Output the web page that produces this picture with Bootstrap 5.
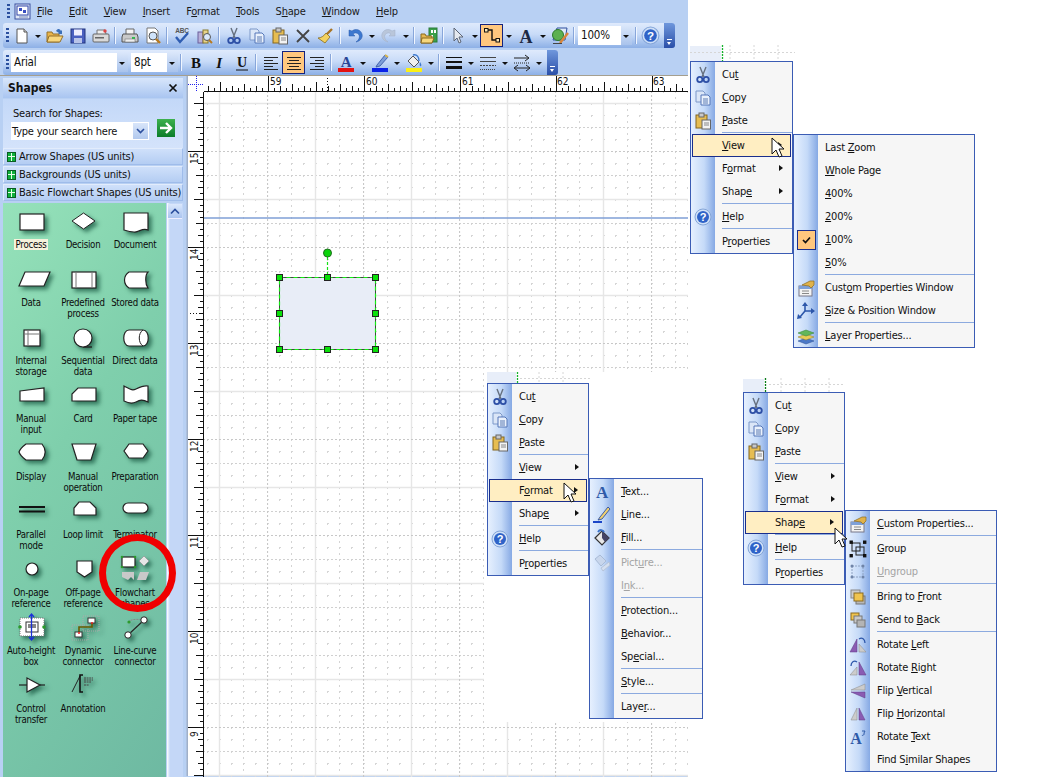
<!DOCTYPE html>
<html lang="en">
<head>
<meta charset="utf-8">
<title>Visio</title>
<link href="https://cdn.jsdelivr.net/npm/bootstrap@5.3.0/dist/css/bootstrap.min.css" rel="stylesheet">
<style>
html,body{margin:0;height:100%;background:#fff;overflow:hidden}
body{font-family:"DejaVu Sans Condensed","DejaVu Sans","Liberation Sans",sans-serif;font-size:11px;letter-spacing:-.2px;line-height:1;color:#111;position:relative;width:1046px;height:777px}
.vwin{width:688px;height:777px;background:#b8d0f3}
.vmenubar{height:23px;padding-left:7px;color:#1a1a1a;font-size:11px}
.vmenubar span{position:relative}
.vgrip{width:3px;height:16px;background:repeating-linear-gradient(#2a4f9e 0 2px,transparent 2px 4px);flex:none}
.vlogo{flex:none}
.v36{margin-left:5px}
.vgap{margin-left:16.3px}
.vtool{margin-left:3px;height:25px;background:linear-gradient(#dfeafc,#c8dbf8 45%,#8db0e6);border-radius:3px;position:relative}
.vt1{width:672px;margin-bottom:2px}
.vt2{width:555px}
.vgp{width:8px;flex:none;display:flex;justify-content:center}
.tb{width:23px;height:23px;flex:none;display:flex;align-items:center;justify-content:center}
.tb21{width:21px}
.ta{width:11px;height:23px;flex:none;position:relative}
.ta::after{content:"";position:absolute;left:3px;top:11px;border:3px solid transparent;border-top:3px solid #111;border-bottom:0}
.ts{width:6px;height:17px;flex:none;position:relative}
.ts::after{content:"";position:absolute;left:2px;top:0;width:1px;height:17px;background:#88a6da;box-shadow:1px 0 0 #f0f6ff}
.ton{background:#ffc77e;outline:1px solid #14237f;outline-offset:-1px}
.vcombo{height:19px;background:#fff;display:flex;align-items:center;padding-left:3px;position:relative;flex:none;font-size:11.5px}
.vcombo::after{content:"";position:absolute;right:0;top:0;width:11px;height:19px;background:linear-gradient(#d9e6fa,#a9c3ec)}
.vcombo::before{content:"";position:absolute;z-index:1;right:3px;top:9px;border:3px solid transparent;border-top:3px solid #111;border-bottom:0}
.cb1{width:117px}.cb2{width:47px;margin-left:3px}.cb3{width:54px;margin:0 1px 0 1px}
.vchev{position:absolute;right:0;top:0;width:11px;height:25px;background:linear-gradient(#6f97dc,#2a4fa8);border-radius:0 3px 3px 0}
.vchev::after{content:"";position:absolute;left:3px;top:16px;width:5px;border-top:1px solid #fff}
.vchev::before{content:"";position:absolute;left:3px;top:19px;border:2.5px solid transparent;border-top:3px solid #fff;border-bottom:0}
.vmain{height:701px;border-top:1px solid #a59f8e}
.vside{width:183px;padding-left:3px;flex:none;padding-top:2px}
.vshead{height:20px;background:linear-gradient(#d8e6fb,#a9c5f1);padding:0 5px;font-weight:700;font-size:12px;letter-spacing:0;margin-bottom:1px}
.vsearch{height:49px;background:linear-gradient(#c3d8f8,#d4e3fb);padding:9px 0 0 10px;font-size:11px}
.vsinp{height:18px;width:138px;background:#fff;padding-left:1px;margin-top:3px;position:relative;align-items:center;display:flex;margin-left:-2px}
.vsinp i{position:absolute;right:1px;top:1px;width:15px;height:16px;background:linear-gradient(#d8e5fa,#b2c9ee)}
.vgo{width:18px;height:18px;margin-left:8px;background:linear-gradient(#3db14e,#0b7d2a);display:flex;align-items:center;justify-content:center}
.vsten{height:17px;margin-bottom:1px;background:linear-gradient(#cfe0fa,#b4cdf3);border:1px solid #9fbcea;border-left-color:#e2ecfc;border-top-color:#e2ecfc;padding-left:3px;gap:3px;font-size:11px;white-space:nowrap;width:180px}
.vstic{width:9px;height:10px;background:#0fb03c;border:1px solid #0a5d22;display:block;background-image:linear-gradient(#e8ffe8,#e8ffe8),linear-gradient(#e8ffe8,#e8ffe8);background-size:7px 1px,1px 8px;background-position:center,center;background-repeat:no-repeat;flex:none}
.vshp{height:575px;margin-top:2px;position:relative}
.vgreen{width:163px;background:linear-gradient(125deg,#96e2ba,#7fcfac 40%,#6eb9a2);padding:5px 0 0 2px;display:grid;grid-template-columns:repeat(3,52px);grid-auto-rows:58px;align-content:start;flex:none}
.vcell{text-align:center;font-size:9.6px;letter-spacing:-.25px;line-height:11px;color:#0c0c0c;white-space:nowrap}
.vcell svg{display:block;overflow:visible;filter:drop-shadow(3px 3px 2px rgba(10,70,50,.65))}
.vcell div{margin-top:1px}
.vpick span{background:#f6f2dc;padding:0 2px}
.vscroll{width:16px;margin-left:1px;background:linear-gradient(to right,#fff 0,#c4d7f7 3px,#c4d7f7);position:relative;flex:none}
.vsup{height:15px;margin:1px;background:linear-gradient(#dbe8fc,#aac4ef);border-bottom:1px solid #eef;display:flex;align-items:center;justify-content:center}
.vsplit{width:5px;flex:none;background:linear-gradient(to right,#b8d0f3 50%,#9aa7bd)}
.vcanvas{width:500px;background:#fff;flex:none}
.vcorner{width:16px;height:16px;flex:none}
.vnum{font:10px "DejaVu Sans Condensed","DejaVu Sans",sans-serif;letter-spacing:0;fill:#111}
.vring{position:absolute;left:99px;top:534px;width:77px;height:78px;border:7px solid #f00000;border-radius:50%}
.vwhite{position:absolute;left:484px;top:372px;width:206px;height:350px;background:#fff}
.vfrag{position:absolute;display:block}
.vf1{left:690px;top:45px}.vf2{left:487px;top:372px}.vf3{left:743px;top:378px}
.vm{position:absolute;border:1.3px solid #3b5cb4;background:linear-gradient(to right,#e6f0fe,#c5daf8 55%,#86a9e4) no-repeat left top/24px 100%,#f6f6f6;padding-top:1px;color:#111;white-space:nowrap;font-size:11px}
.ma{left:690px;top:61px;width:103px}
.mb{left:793px;top:134px;width:182px}
.mc{left:487px;top:383px;width:102px}
.md{left:589px;top:478px;width:114px}
.me{left:743px;top:392px;width:102px}
.mf{left:845px;top:510px;width:152px}
.vi{height:23px;display:flex;align-items:center;position:relative}
.vii{width:24px;height:23px;display:flex;align-items:center;justify-content:center;flex:none}
.vit{padding-left:7px}
.vsub::after{content:"";position:absolute;right:9px;top:8px;border:3.5px solid transparent;border-left:4px solid #111;border-right:0}
.vhi{background:#ffeec2;outline:1.3px solid #1a2e8c;outline-offset:-1px;margin:0 1px}
.vhi .vii{margin-left:-1px}
.vdis{color:#a4a4a4}
.vsep{height:2px;background:#8caadf;margin-left:31px;border-bottom:1px solid #f6f6f6}
.vchk{width:19px;height:20px;background:#ffc77e;outline:1.3px solid #1a2e8c;outline-offset:-1px;display:flex;align-items:center;justify-content:center}
.vcur{position:absolute;display:block;z-index:5}
.vc1{left:771px;top:137px}.vc2{left:563px;top:482px}.vc3{left:834px;top:527px}
u{text-underline-offset:1px;text-decoration-thickness:1px}
</style>
</head>
<body>
<svg width="0" height="0" class="position-absolute">
<defs>
<symbol id="i-new" viewBox="0 0 18 18"><path d="M4 2h7l3 3v11H4z" fill="#fff" stroke="#555"/><path d="M11 2v3h3" fill="#ddd" stroke="#555"/></symbol>
<symbol id="i-open" viewBox="0 0 18 18"><path d="M1 5h5l1 2h6v8H1z" fill="#e9b44a" stroke="#94702a"/><path d="M3 9h14l-3 6H1z" fill="#f8d77e" stroke="#94702a"/><path d="M10 4c2-3 4-2 5 0l1-1v4h-4l1-1c-1-1-2-1-3-2z" fill="#3a6fb8"/></symbol>
<symbol id="i-save" viewBox="0 0 18 18"><rect x="2" y="2" width="14" height="14" fill="#4a60c0" stroke="#22347e"/><rect x="5" y="2.5" width="8" height="6" fill="#eef"/><rect x="5" y="11" width="8" height="5" fill="#b9c4e8"/></symbol>
<symbol id="i-web" viewBox="0 0 18 18"><path d="M5 7V3h8l1 4" fill="#eee" stroke="#777"/><rect x="1" y="7" width="16" height="8" rx="1" fill="#d9d9d9" stroke="#666"/><rect x="3" y="10" width="9" height="1.5" fill="#666"/><circle cx="13" cy="4" r="1.7" fill="#d44"/></symbol>
<symbol id="i-print" viewBox="0 0 18 18"><path d="M5 7V2h8v5" fill="#f4f4f4" stroke="#666"/><path d="M2 7h14l1 3v5H1v-5z" fill="#c9c9c9" stroke="#555"/><rect x="11" y="10" width="3" height="2" fill="#2bbd4b"/><rect x="4" y="12" width="10" height="3" fill="#eee" stroke="#777" stroke-width=".6"/></symbol>
<symbol id="i-prev" viewBox="0 0 18 18"><path d="M3 1h8l3 3v12H3z" fill="#fff" stroke="#777"/><circle cx="9" cy="9" r="4" fill="#cfe3fa" stroke="#555"/><path d="M12 12l4 4" stroke="#b97a1f" stroke-width="2.4"/></symbol>
<symbol id="i-spell" viewBox="0 0 18 18"><text x="9" y="6" text-anchor="middle" font-family="Liberation Sans,sans-serif" font-size="6.5" font-weight="700" fill="#555">ABC</text><path d="M3 10l4 5 8-9" fill="none" stroke="#2f5db2" stroke-width="2.4"/></symbol>
<symbol id="i-res" viewBox="0 0 18 18"><rect x="2" y="5" width="5" height="11" fill="#b9b0d8" stroke="#6a5f9c"/><rect x="7" y="3" width="5" height="13" fill="#e8d48c" stroke="#8a7a2a"/><circle cx="11" cy="10" r="3.5" fill="#dbe9fb" stroke="#555"/><path d="M13 13l3 3" stroke="#b97a1f" stroke-width="2"/></symbol>
<symbol id="i-cut" viewBox="0 0 18 18"><path d="M6 1l4 10M12 1L8 11" stroke="#66707f" stroke-width="1.4" fill="none"/><circle cx="5.8" cy="13.5" r="2.6" fill="none" stroke="#2d4fa6" stroke-width="1.8"/><circle cx="12.2" cy="13.5" r="2.6" fill="none" stroke="#2d4fa6" stroke-width="1.8"/></symbol>
<symbol id="i-copy" viewBox="0 0 18 18"><path d="M2 2h7l2 2v9H2z" fill="#dbe6f7" stroke="#7d98c9"/><path d="M7 6h7l2 2v8H7z" fill="#eaf1fc" stroke="#5577b8"/><path d="M9 10h5M9 12h5M9 14h5" stroke="#5b7ab3"/></symbol>
<symbol id="i-paste" viewBox="0 0 18 18"><rect x="2" y="3" width="11" height="13" fill="#e6bd52" stroke="#84661e"/><rect x="5" y="1" width="5" height="4" fill="#c8c8c8" stroke="#666"/><rect x="8" y="8" width="8.5" height="9" fill="#f3f3f3" stroke="#666"/><path d="M10 11h5M10 13h5" stroke="#888"/></symbol>
<symbol id="i-x" viewBox="0 0 18 18"><path d="M3 3l12 12M15 3L3 15" stroke="#444" stroke-width="1.8"/></symbol>
<symbol id="i-brush" viewBox="0 0 18 18"><path d="M15 2L9 8" stroke="#a97424" stroke-width="2.4"/><path d="M9 6l4 4-5 6-7-5c3 0 6-2 8-5z" fill="#f3d25f" stroke="#8a6c1e" stroke-width=".8"/></symbol>
<symbol id="i-undo" viewBox="0 0 18 18"><path d="M3 3v6h6L7 7c2-2 5-1 6 1 1 2 0 5-3 7 5-1 7-5 6-8-1-4-6-6-10-3z" fill="#3d78cf" stroke="#2a5aa8" stroke-width=".5"/></symbol>
<symbol id="i-redo" viewBox="0 0 18 18"><path d="M15 3v6H9l2-2c-2-2-5-1-6 1-1 2 0 5 3 7-5-1-7-5-6-8 1-4 6-6 10-3z" fill="#b9c6da" stroke="#a0aec6" stroke-width=".5"/></symbol>
<symbol id="i-fold" viewBox="0 0 18 18"><rect x="9" y="1" width="8" height="14" fill="#3aa04a" stroke="#2a7a38"/><rect x="11" y="3" width="2" height="3" fill="#fff"/><rect x="14" y="3" width="2" height="3" fill="#fff"/><rect x="11" y="8" width="2" height="3" fill="#fff"/><path d="M1 7h4l1 2h6v7H1z" fill="#e4b650" stroke="#8a6a20"/><path d="M2 11h12l-2 5H1z" fill="#f6d77c" stroke="#8a6a20"/></symbol>
<symbol id="i-ptr" viewBox="0 0 18 18"><path d="M5 1v13l3-3 2 5 2-1-2-5h4z" fill="#e5e9f0" stroke="#5d6677"/></symbol>
<symbol id="i-conn" viewBox="0 0 18 18"><path d="M4 3h5v10h5" fill="none" stroke="#111" stroke-width="1.4"/><rect x="1.500" y="1.500" width="3.500" height="3.500" fill="#ffe9b8" stroke="#111"/><rect x="13" y="11.500" width="3.500" height="3.500" fill="#ffe9b8" stroke="#111"/></symbol>
<symbol id="i-a" viewBox="0 0 18 18"><text x="9" y="15.5" text-anchor="middle" font-family="Liberation Serif,serif" font-size="18" font-weight="700" fill="#1d2a44">A</text></symbol>
<symbol id="i-tool" viewBox="0 0 18 18"><path d="M6 1h10l-2 12H2z" fill="#dfe9f8" stroke="#2f4f9e"/><circle cx="7" cy="8" r="5.5" fill="#5cb04f" stroke="#2d7a2d"/><path d="M9 16L17 6" stroke="#d9853b" stroke-width="2.4"/><path d="M2 16.500h9" stroke="#444"/></symbol>
<symbol id="i-help" viewBox="0 0 18 18"><circle cx="9" cy="9" r="8" fill="#cfe0f7" stroke="#84a5d8"/><circle cx="9" cy="9" r="6" fill="#2f63c8"/><text x="9" y="13" text-anchor="middle" font-family="Liberation Sans,sans-serif" font-size="11" font-weight="700" fill="#fff">?</text></symbol>
<symbol id="i-fontA" viewBox="0 0 18 18"><text x="9" y="12.500" text-anchor="middle" font-family="Liberation Serif,serif" font-size="15" font-weight="700" fill="#2a4596">A</text><rect x="1" y="14" width="16" height="4" fill="#e31212"/></symbol>
<symbol id="i-pen" viewBox="0 0 18 18"><path d="M6 11L14 1l3 2-8 9-4 1z" fill="#7e9fd8" stroke="#2f4f9e" stroke-width=".8"/><path d="M14 1l3 2" stroke="#d9b54c" stroke-width="2"/><rect x="1" y="14" width="16" height="4" fill="#0a22e8"/></symbol>
<symbol id="i-fill" viewBox="0 0 18 18"><path d="M3 7l5-5 6 6-5 5z" fill="#efefef" stroke="#555"/><path d="M8 1c4-1 6 2 6 6" fill="none" stroke="#3c78cf" stroke-width="1.4"/><path d="M15 8c1 2 2 3 1 4s-2-1-1-4z" fill="#3c78cf"/><rect x="1" y="14" width="16" height="4" fill="#fbf015"/></symbol>
<symbol id="i-lw" viewBox="0 0 18 18"><rect x="1" y="3" width="16" height="1" fill="#111"/><rect x="1" y="7" width="16" height="2" fill="#111"/><rect x="1" y="12" width="16" height="3" fill="#111"/></symbol>
<symbol id="i-dash" viewBox="0 0 18 18"><path d="M1 3.500h16M1 7.500h16" stroke="#444"/><path d="M1 11.500h16" stroke="#444" stroke-dasharray="2 1"/><path d="M1 15.500h16" stroke="#444" stroke-dasharray="1 1"/></symbol>
<symbol id="i-arrows" viewBox="0 0 18 18"><path d="M1 4h14M12 1l4 3-4 3" fill="none" stroke="#222"/><path d="M1 9h16" stroke="#222" stroke-dasharray="1 1"/><path d="M2 14h15M5 11l-4 3 4 3M13 11l4 3-4 3" fill="none" stroke="#222"/></symbol>
<symbol id="i-al" viewBox="0 0 18 18"><path d="M2 3.500h14M2 6.500h9M2 9.500h14M2 12.500h9M2 15.500h14" stroke="#222"/></symbol>
<symbol id="i-ac" viewBox="0 0 18 18"><path d="M2 3.500h14M4 6.500h10M2 9.500h14M4 12.500h10M2 15.500h14" stroke="#222"/></symbol>
<symbol id="i-ar" viewBox="0 0 18 18"><path d="M2 3.500h14M7 6.500h9M2 9.500h14M7 12.500h9M2 15.500h14" stroke="#222"/></symbol>
<symbol id="i-cprop" viewBox="0 0 18 18"><rect x="2" y="7" width="13" height="10" fill="#f3f3f3" stroke="#778"/><rect x="2" y="7" width="13" height="3" fill="#7ea0d8"/><path d="M5 12h7M5 14.500h7" stroke="#888"/><path d="M5 6l8-4h4v4l-3 3-2-2z" fill="#e0b24a" stroke="#8a6a20" stroke-width=".7"/></symbol>
<symbol id="i-size" viewBox="0 0 18 18"><path d="M8 9V3M8 9L3 15M8 9l7 0" stroke="#2d57aa" stroke-width="1.6"/><path d="M8 0l3 4H5zM0 17l1-5 4 4zM18 9l-4 3V6z" fill="#2d57aa"/></symbol>
<symbol id="i-layer" viewBox="0 0 18 18"><path d="M1 14l8-3 8 3-8 3z" fill="#4a78c8" stroke="#2b4f92" stroke-width=".5"/><path d="M1 10l8-3 8 3-8 3z" fill="#e7cb56" stroke="#907a20" stroke-width=".5"/><path d="M1 6l8-3 8 3-8 3z" fill="#62b65a" stroke="#2e7e2e" stroke-width=".5"/></symbol>
<symbol id="i-line" viewBox="0 0 18 18"><path d="M7 11l8-10 2 2-8 10-4 1z" fill="#f0d070" stroke="#2f4f9e" stroke-width=".9"/><path d="M0 16h9" stroke="#1a45c8" stroke-width="2"/></symbol>
<symbol id="i-bkt" viewBox="0 0 18 18"><path d="M2 9l7-7 7 7-7 7z" fill="#e8e8e8" stroke="#333" stroke-width="1.2"/><path d="M9 2l7 7-4 4-3-4z" fill="#446"/><path d="M5 3c2-3 5-2 6 0" fill="none" stroke="#3a72c8" stroke-width="2"/></symbol>
<symbol id="i-pic" viewBox="0 0 18 18"><path d="M2 5l5-4 6 6-5 5z" fill="#c8d6ec" stroke="#a9bbd6"/><path d="M8 14l8-6 1 3-7 6z" fill="#d5dfef" stroke="#b6c4da"/></symbol>
<symbol id="i-grp" viewBox="0 0 18 18"><rect x="3" y="3" width="8" height="8" fill="none" stroke="#222"/><rect x="7" y="7" width="8" height="8" fill="none" stroke="#222"/><g fill="#111"><rect x="0.500" y="0.500" width="3.400" height="3.400"/><rect x="14" y="0.500" width="3.400" height="3.400"/><rect x="0.500" y="14" width="3.400" height="3.400"/><rect x="14" y="14" width="3.400" height="3.400"/></g></symbol>
<symbol id="i-ugrp" viewBox="0 0 18 18"><path d="M3 3h11v11H3z" fill="none" stroke="#8ea2c2" stroke-dasharray="2 1"/><g fill="#6f84a8"><circle cx="3" cy="3" r="1.500"/><circle cx="14" cy="3" r="1.500"/><circle cx="3" cy="14" r="1.500"/><circle cx="14" cy="14" r="1.500"/></g></symbol>
<symbol id="i-front" viewBox="0 0 18 18"><rect x="7" y="8" width="9" height="8" fill="#b8b8b8" stroke="#777"/><rect x="2" y="2" width="9" height="8" fill="#ccc" stroke="#888"/><rect x="5" y="5" width="9" height="8" fill="#f0c44e" stroke="#8a6a20"/></symbol>
<symbol id="i-back" viewBox="0 0 18 18"><rect x="2" y="2" width="8" height="7" fill="#f0c44e" stroke="#8a6a20"/><rect x="5" y="5" width="8" height="7" fill="#c9c9c9" stroke="#777"/><rect x="8" y="9" width="8" height="7" fill="#b4b4b4" stroke="#777"/></symbol>
<symbol id="i-rl" viewBox="0 0 18 18"><path d="M8 3v13H1z" fill="#8a5bb2" stroke="#5e3a85" stroke-width=".5"/><path d="M10 8v8h7z" fill="#ccc" stroke="#888" stroke-width=".5"/><path d="M10 3c3-2 6 0 6 4" fill="none" stroke="#2d57aa" stroke-width="1.3"/></symbol>
<symbol id="i-rr" viewBox="0 0 18 18"><path d="M10 3v13h7z" fill="#8a5bb2" stroke="#5e3a85" stroke-width=".5"/><path d="M8 8v8H1z" fill="#ccc" stroke="#888" stroke-width=".5"/><path d="M8 3c-3-2-6 0-6 4" fill="none" stroke="#2d57aa" stroke-width="1.3"/></symbol>
<symbol id="i-fv" viewBox="0 0 18 18"><path d="M16 2v6H2z" fill="#ccc" stroke="#888" stroke-width=".5"/><path d="M16 16v-6H2z" fill="#8a5bb2" stroke="#5e3a85" stroke-width=".5"/></symbol>
<symbol id="i-fh" viewBox="0 0 18 18"><path d="M2 15h6V3z" fill="#ccc" stroke="#888" stroke-width=".5"/><path d="M16 15h-6V3z" fill="#8a5bb2" stroke="#5e3a85" stroke-width=".5"/></symbol>
<symbol id="i-rt" viewBox="0 0 18 18"><text x="7" y="16" text-anchor="middle" font-family="Liberation Serif,serif" font-size="16" font-weight="700" fill="#2f5aa8">A</text><path d="M13 3h3l-1 2c1 2-2 3-2 2" fill="none" stroke="#2f5aa8"/></symbol>
<symbol id="i-txtA" viewBox="0 0 18 18"><text x="9" y="15" text-anchor="middle" font-family="Liberation Serif,serif" font-size="17" font-weight="700" fill="#2f5aa8">A</text></symbol>
<symbol id="i-cur" viewBox="0 0 14 22"><path d="M1 1v16l4-4 3 7 3-1-3-7h5z" fill="#fff" stroke="#111"/></symbol>
<pattern id="rt" width="96" height="16" x="64" patternUnits="userSpaceOnUse"><path d="M.5 0v16M6.5 12v4M12.5 10v6M18.5 12v4M24.5 8v8M30.5 12v4M36.5 10v6M42.5 12v4M48.5 6v10M54.5 12v4M60.5 10v6M66.5 12v4M72.5 8v8M78.5 12v4M84.5 10v6M90.500 12v4" stroke="#111"/></pattern>
<pattern id="rl" width="16" height="96" y="59" patternUnits="userSpaceOnUse"><path d="M0 .5h16M12 6.500h4M10 12.500h6M12 18.500h4M8 24.500h8M12 30.500h4M10 36.500h6M12 42.500h4M6 48.500h10M12 54.500h4M10 60.500h6M12 66.500h4M8 72.500h8M12 78.500h4M10 84.500h6M12 90.500h4" stroke="#111"/></pattern>
<pattern id="gr" width="96" height="96" x="63" y="59" patternUnits="userSpaceOnUse">
<g fill="none">
<path d="M12.500 0v96M36.500 0v96M60.500 0v96M84.500 0v96M0 12.500h96M0 36.500h96M0 60.500h96M0 84.500h96" stroke="#d6d6d6" stroke-dasharray="2 10"/>
<path d="M24.500 0v96M72.500 0v96" stroke="#d4d4d4" stroke-dasharray="2 4"/>
<path d="M0 24.500h96M0 72.500h96" stroke="#d0d0d0" stroke-dasharray="2 2"/>
<path d="M48.500 0v96M0 48.500h96" stroke="#e6e6e6" stroke-width="1.400"/>
<path d="M.5 0v96M0 .5h96" stroke="#c8c8c8" stroke-dasharray="2 2" stroke-width="1.200"/>
</g></pattern>
</defs>
</svg>

<div class="vwin">
  <div class="vmenubar d-flex align-items-center">
    <div class="vgrip"></div>
    <svg class="vlogo ms-1" width="18" height="20" viewBox="0 0 18 20"><rect x="1" y="2" width="15" height="15" fill="#dfe7f6" stroke="#3a4f9e"/><rect x="3" y="4" width="11" height="9" fill="#fff" stroke="#2f45a8"/><rect x="5" y="6" width="3" height="3" fill="#3a4fc0"/><rect x="9" y="8" width="3" height="3" fill="#3a4fc0"/><path d="M5 15h9" stroke="#7e8fb8"/></svg>
    <span class="v36"><u>F</u>ile</span>
    <span class="vgap"><u>E</u>dit</span>
    <span class="vgap"><u>V</u>iew</span>
    <span class="vgap"><u>I</u>nsert</span>
    <span class="vgap">F<u>o</u>rmat</span>
    <span class="vgap"><u>T</u>ools</span>
    <span class="vgap">S<u>h</u>ape</span>
    <span class="vgap"><u>W</u>indow</span>
    <span class="vgap"><u>H</u>elp</span>
  </div>
  <div class="vtool vt1 d-flex align-items-center">
    <div class="vgp"><div class="vgrip"></div></div>
    <div class="tb tb21"><svg width="18" height="18"><use href="#i-new"/></svg></div><div class="ta"></div>
    <div class="tb"><svg width="18" height="18"><use href="#i-open"/></svg></div>
    <div class="tb"><svg width="18" height="18"><use href="#i-save"/></svg></div>
    <div class="tb"><svg width="18" height="18"><use href="#i-web"/></svg></div>
    <div class="ts"></div>
    <div class="tb"><svg width="18" height="18"><use href="#i-print"/></svg></div>
    <div class="tb"><svg width="18" height="18"><use href="#i-prev"/></svg></div>
    <div class="ts"></div>
    <div class="tb"><svg width="18" height="18"><use href="#i-spell"/></svg></div>
    <div class="tb"><svg width="18" height="18"><use href="#i-res"/></svg></div>
    <div class="ts"></div>
    <div class="tb"><svg width="18" height="18"><use href="#i-cut"/></svg></div>
    <div class="tb"><svg width="18" height="18"><use href="#i-copy"/></svg></div>
    <div class="tb"><svg width="18" height="18"><use href="#i-paste"/></svg></div>
    <div class="tb"><svg width="18" height="18"><use href="#i-x"/></svg></div>
    <div class="tb"><svg width="18" height="18"><use href="#i-brush"/></svg></div>
    <div class="ts"></div>
    <div class="tb"><svg width="18" height="18"><use href="#i-undo"/></svg></div><div class="ta"></div>
    <div class="tb"><svg width="18" height="18"><use href="#i-redo"/></svg></div><div class="ta"></div>
    <div class="ts"></div>
    <div class="tb"><svg width="18" height="18"><use href="#i-fold"/></svg></div>
    <div class="ts"></div>
    <div class="tb"><svg width="18" height="18"><use href="#i-ptr"/></svg></div><div class="ta"></div>
    <div class="tb ton"><svg width="18" height="18"><use href="#i-conn"/></svg></div><div class="ta"></div>
    <div class="tb"><svg width="18" height="18"><use href="#i-a"/></svg></div><div class="ta"></div>
    <div class="tb"><svg width="18" height="18"><use href="#i-tool"/></svg></div>
    <div class="ts"></div>
    <div class="vcombo cb3">100%</div>
    <div class="ts"></div>
    <div class="tb"><svg width="19" height="19"><use href="#i-help"/></svg></div>
    <div class="vchev"></div>
  </div>
  <div class="vtool vt2 d-flex align-items-center">
    <div class="vgp"><div class="vgrip"></div></div>
    <div class="vcombo cb1">Arial</div>
    <div class="vcombo cb2">8pt</div>
    <div class="ts"></div>
    <div class="tb"><svg width="18" height="18" viewBox="0 0 18 18"><text x="9" y="14" text-anchor="middle" font-family="Liberation Serif,serif" font-size="15" font-weight="700" fill="#111">B</text></svg></div>
    <div class="tb"><svg width="18" height="18" viewBox="0 0 18 18"><text x="9" y="14" text-anchor="middle" font-family="Liberation Serif,serif" font-size="15" font-weight="700" font-style="italic" fill="#111">I</text></svg></div>
    <div class="tb"><svg width="18" height="18" viewBox="0 0 18 18"><text x="9" y="13" text-anchor="middle" font-family="Liberation Serif,serif" font-size="14" font-weight="700" fill="#111">U</text><path d="M3 16h12" stroke="#111"/></svg></div>
    <div class="ts"></div>
    <div class="tb"><svg width="18" height="18"><use href="#i-al"/></svg></div>
    <div class="tb ton"><svg width="18" height="18"><use href="#i-ac"/></svg></div>
    <div class="tb"><svg width="18" height="18"><use href="#i-ar"/></svg></div>
    <div class="ts"></div>
    <div class="tb"><svg width="18" height="18"><use href="#i-fontA"/></svg></div><div class="ta"></div>
    <div class="tb"><svg width="18" height="18"><use href="#i-pen"/></svg></div><div class="ta"></div>
    <div class="tb"><svg width="18" height="18"><use href="#i-fill"/></svg></div><div class="ta"></div>
    <div class="ts"></div>
    <div class="tb"><svg width="18" height="18"><use href="#i-lw"/></svg></div><div class="ta"></div>
    <div class="tb"><svg width="18" height="18"><use href="#i-dash"/></svg></div><div class="ta"></div>
    <div class="tb"><svg width="18" height="18"><use href="#i-arrows"/></svg></div><div class="ta"></div>
    <div class="vchev"></div>
  </div>

  <div class="vmain d-flex">
    <div class="vside">
      <div class="vshead d-flex align-items-center justify-content-between"><span>Shapes</span><svg width="10" height="10" viewBox="0 0 10 10"><path d="M1.500 1.500l7 7M8.500 1.500l-7 7" stroke="#111" stroke-width="1.700"/></svg></div>
      <div class="vsearch">
        <div>Search for Shapes:</div>
        <div class="d-flex">
          <div class="vsinp">Type your search here<i></i>
            <svg class="position-absolute end-0 me-1" width="9" height="6" viewBox="0 0 9 6"><path d="M1 1l3.500 3.500L8 1" fill="none" stroke="#2c4f9e" stroke-width="1.600"/></svg>
          </div>
          <div class="vgo"><svg width="14" height="12" viewBox="0 0 14 12"><path d="M1 6h10M7 1l5 5-5 5" fill="none" stroke="#fff" stroke-width="2.400"/></svg></div>
        </div>
      </div>
      <div class="vsten d-flex align-items-center"><i class="vstic"></i>Arrow Shapes (US units)</div>
      <div class="vsten d-flex align-items-center"><i class="vstic"></i>Backgrounds (US units)</div>
      <div class="vsten d-flex align-items-center"><i class="vstic"></i>Basic Flowchart Shapes (US units)</div>
      <div class="vshp d-flex">
        <div class="vgreen">
          <div class="vcell vpick"><svg width="52" height="30" viewBox="0 0 52 30"><rect x="15" y="6" width="24" height="16" fill="#fff" stroke="#222" stroke-width="1.200"/></svg><div><span>Process</span></div></div>
          <div class="vcell"><svg width="52" height="30"><path d="M15 13L26.500 5 38 13 26.500 21z" fill="#fff" stroke="#222"/></svg><div>Decision</div></div>
          <div class="vcell"><svg width="52" height="30"><path d="M15 5h24v17c-6-3-9 3-14 2-4 0-7-1-10-2z" fill="#fff" stroke="#222" stroke-width="1.200"/></svg><div>Document</div></div>

          <div class="vcell"><svg width="52" height="30"><path d="M20 6h25l-6 14H14z" fill="#fff" stroke="#222" stroke-width="1.200"/></svg><div>Data</div></div>
          <div class="vcell"><svg width="52" height="30"><rect x="15" y="6" width="24" height="16" fill="#fff" stroke="#222" stroke-width="1.200"/><path d="M19 6v16M35 6v16" stroke="#777"/></svg><div>Predefined<br>process</div></div>
          <div class="vcell"><svg width="52" height="30"><path d="M20 6h19c-3 3-3 12 0 16H20c-6-4-6-12 0-16z" fill="#fff" stroke="#222" stroke-width="1.200"/></svg><div>Stored data</div></div>

          <div class="vcell"><svg width="52" height="30"><rect x="19" y="6" width="16" height="16" fill="#fff" stroke="#222" stroke-width="1.200"/><path d="M23 6v16M19 10h16" stroke="#777"/></svg><div>Internal<br>storage</div></div>
          <div class="vcell"><svg width="52" height="30"><path d="M26 23h9" stroke="#222" stroke-width="1.400"/><circle cx="26" cy="14" r="9" fill="#fff" stroke="#222" stroke-width="1.200"/></svg><div>Sequential<br>data</div></div>
          <div class="vcell"><svg width="52" height="30"><path d="M20 6h14c7 0 7 16 0 16H20c-7 0-7-16 0-16z" fill="#fff" stroke="#222" stroke-width="1.200"/><path d="M34 6c-5 3-5 13 0 16" fill="none" stroke="#222"/></svg><div>Direct data</div></div>

          <div class="vcell"><svg width="52" height="30"><path d="M15 9l24-3v13H15z" fill="#fff" stroke="#222" stroke-width="1.200"/></svg><div>Manual<br>input</div></div>
          <div class="vcell"><svg width="52" height="30"><path d="M21 6h18v13H15v-7z" fill="#fff" stroke="#222" stroke-width="1.200"/></svg><div>Card</div></div>
          <div class="vcell"><svg width="52" height="30"><path d="M15 4c6 3 8 5 12 3s8-4 12-3v16c-6-3-8-2-12 0s-8 1-12-1z" fill="#fff" stroke="#222" stroke-width="1.200"/></svg><div>Paper tape</div></div>

          <div class="vcell"><svg width="52" height="30"><path d="M21 4h16c4 5 4 11 0 16H21c-4-3-6-5-7-8 1-3 3-5 7-8z" fill="#fff" stroke="#222" stroke-width="1.200"/></svg><div>Display</div></div>
          <div class="vcell"><svg width="52" height="30"><path d="M15 4h24l-5 16H20z" fill="#fff" stroke="#222" stroke-width="1.200"/></svg><div>Manual<br>operation</div></div>
          <div class="vcell"><svg width="52" height="30"><path d="M20 4h14l5 7-5 7H20l-5-7z" fill="#fff" stroke="#222" stroke-width="1.200"/></svg><div>Preparation</div></div>

          <div class="vcell"><svg width="52" height="30"><path d="M14 9h26M14 13.500h26" stroke="#111" stroke-width="2"/></svg><div>Parallel<br>mode</div></div>
          <div class="vcell"><svg width="52" height="30"><path d="M22 4h11l6 6v7H17v-7z" fill="#fff" stroke="#222" stroke-width="1.200"/></svg><div>Loop limit</div></div>
          <div class="vcell"><svg width="52" height="30"><rect x="14" y="5" width="25" height="10" rx="5" fill="#fff" stroke="#222" stroke-width="1.200"/></svg><div>Terminator</div></div>

          <div class="vcell"><svg width="52" height="30"><circle cx="27" cy="13" r="6" fill="#fff" stroke="#222" stroke-width="1.200"/></svg><div>On-page<br>reference</div></div>
          <div class="vcell"><svg width="52" height="30"><path d="M20 5h15v11l-7.500 5-7.500-5z" fill="#fff" stroke="#222" stroke-width="1.200"/></svg><div>Off-page<br>reference</div></div>
          <div class="vcell"><svg width="52" height="30"><rect x="13" y="1" width="13" height="10" fill="#fff" stroke="#222" stroke-width="1.200"/><g fill="#2a9a2a"><circle cx="13" cy="1" r="1.300"/><circle cx="26" cy="1" r="1.300"/><circle cx="13" cy="11" r="1.300"/><circle cx="26" cy="11" r="1.300"/></g><path d="M35 0l5 5-5 5-5-5z" fill="#e6e6e6" stroke="#888" stroke-width=".6"/><path d="M13 16h12v8l-3-3-3 3-6-3z" fill="#c9c9c9"/><path d="M31 16h9l-3 8h-9z" fill="#c9c9c9"/></svg><div>Flowchart<br>shapes</div></div>

          <div class="vcell"><svg width="52" height="30"><rect x="15" y="4" width="24" height="18" fill="#fff" stroke="#777" stroke-dasharray="1 1"/><rect x="21" y="8" width="12" height="10" fill="none" stroke="#333"/><path d="M23 11h8M23 13h8" stroke="#111"/><path d="M26.500 0v26M24 3l2.500-3 2.500 3M24 23l2.500 3 2.500-3" fill="none" stroke="#1a2fd8" stroke-width="1.300"/><circle cx="15" cy="13" r="1.800" fill="#2c9a2c"/><circle cx="39" cy="13" r="1.800" fill="#2c9a2c"/></svg><div>Auto-height<br>box</div></div>
          <div class="vcell"><svg width="52" height="30"><rect x="15" y="11" width="16" height="15" fill="none" stroke="#aaa" stroke-dasharray="1 1"/><rect x="26" y="2" width="16" height="15" fill="none" stroke="#aaa" stroke-dasharray="1 1"/><path d="M22 20v-7h13V7" fill="none" stroke="#6a5c00" stroke-width="1.600"/><rect x="18" y="18" width="7" height="5" fill="#fff" stroke="#333"/><rect x="31" y="4" width="7" height="5" fill="#fff" stroke="#333"/><circle cx="22" cy="19" r="1" fill="#e22"/><circle cx="35" cy="9" r="1" fill="#e22"/></svg><div>Dynamic<br>connector</div></div>
          <div class="vcell"><svg width="52" height="30"><path d="M19 8c3-3 9-3 14-2" fill="none" stroke="#888" stroke-dasharray="2 1"/><path d="M19 21L35 6" stroke="#222" stroke-width="1.200"/><circle cx="35" cy="6" r="3.200" fill="#fff" stroke="#222"/><circle cx="19" cy="21" r="3.200" fill="#fff" stroke="#222"/><circle cx="20" cy="8" r="1.600" fill="#2c9a2c"/></svg><div>Line-curve<br>connector</div></div>

          <div class="vcell"><svg width="52" height="30"><path d="M14 13h26" stroke="#222" stroke-width="1.200"/><path d="M22 6l13 7-13 7z" fill="#fff" stroke="#222" stroke-width="1.200"/></svg><div>Control<br>transfer</div></div>
          <div class="vcell"><svg width="52" height="30"><path d="M15 20L23 4" stroke="#222"/><path d="M26 3h-3v17h3" fill="none" stroke="#111" stroke-width="1.600"/><path d="M27 6h9M27 8h9M27 10h7M27 13h5" stroke="#444" stroke-dasharray="2 .6"/></svg><div>Annotation</div></div>
        </div>
        <div class="vscroll"><div class="vsup"><svg width="10" height="7" viewBox="0 0 10 7"><path d="M1 5.500L5 1.500l4 4" fill="none" stroke="#2c4f9e" stroke-width="1.700"/></svg></div></div>
      </div>
    </div>
    <div class="vsplit"></div>
    <div class="vcanvas">
      <div class="d-flex">
        <svg class="vcorner" viewBox="0 0 16 16"><path d="M0 8.500h16" stroke="#2222ee" stroke-dasharray="1 1"/><path d="M8.500 0v16" stroke="#2222ee" stroke-dasharray="1 1"/></svg>
        <svg width="484" height="16" viewBox="0 0 484 16">
          <rect width="484" height="16" fill="url(#rt)"/>
          <path d="M0 15.500h484" stroke="#111"/>
          <path d="M123.500 2v13" stroke="#111" stroke-dasharray="1 2"/>
          <text class="vnum" x="66" y="9">59</text><text class="vnum" x="162" y="9">60</text><text class="vnum" x="258" y="9">61</text><text class="vnum" x="353" y="9">62</text><text class="vnum" x="449" y="9">63</text>
        </svg>
      </div>
      <div class="d-flex">
        <svg width="16" height="685" viewBox="0 0 16 685" class="flex-none">
          <rect width="16" height="685" fill="url(#rl)"/>
          <path d="M15.500 0v685" stroke="#111"/>
          <path d="M2 221.500h13" stroke="#111" stroke-dasharray="1 2"/>
          <text class="vnum" transform="translate(10 72) rotate(-90)">15</text>
          <text class="vnum" transform="translate(10 168) rotate(-90)">14</text>
          <text class="vnum" transform="translate(10 264) rotate(-90)">13</text>
          <text class="vnum" transform="translate(10 360) rotate(-90)">12</text>
          <text class="vnum" transform="translate(10 456) rotate(-90)">11</text>
          <text class="vnum" transform="translate(10 552) rotate(-90)">10</text>
          <text class="vnum" transform="translate(10 645) rotate(-90)">9</text>
        </svg>
        <svg width="484" height="685" viewBox="0 0 484 685">
          <rect width="484" height="685" fill="url(#gr)"/>
          <path d="M0 126h484" stroke="#7f9fd6" stroke-width="1.500"/>
          <rect x="75.500" y="185.500" width="96" height="72" fill="#e8edf7" stroke="#444"/>
          <rect x="75.500" y="185.500" width="96" height="72" fill="none" stroke="#10ef10" stroke-width="1.200" stroke-dasharray="4 3"/>
          <path d="M123.500 165v20" stroke="#16e016" stroke-dasharray="3 2" stroke-width="1.200"/>
          <circle cx="123.500" cy="161" r="4" fill="#0ad40a" stroke="#236d23"/>
          <g fill="#0ae00a" stroke="#222" stroke-width="1">
            <rect x="72.500" y="182.500" width="6" height="6"/><rect x="120.500" y="182.500" width="6" height="6"/><rect x="168.500" y="182.500" width="6" height="6"/>
            <rect x="72.500" y="218.500" width="6" height="6"/><rect x="168.500" y="218.500" width="6" height="6"/>
            <rect x="72.500" y="254.500" width="6" height="6"/><rect x="120.500" y="254.500" width="6" height="6"/><rect x="168.500" y="254.500" width="6" height="6"/>
          </g>
        </svg>
      </div>
    </div>
  </div>
</div>

<div class="vring"></div>
<div class="vwhite"></div>

<svg class="vfrag vf1" width="105" height="16" viewBox="0 0 105 16"><rect y="1" width="31" height="15" fill="#e8eef9"/><path d="M0 7.500h105M40 0v16M64 0v16M88 0v16" stroke="#d6d6d6" stroke-dasharray="2 2"/><path d="M32.500 0v16" stroke="#17b32d" stroke-dasharray="2 1" stroke-width="1.300"/></svg>
<svg class="vfrag vf2" width="103" height="11" viewBox="0 0 103 11"><rect width="29" height="11" fill="#e8eef9"/><path d="M33 6.500h70M52 0v11M76 0v11" stroke="#d6d6d6" stroke-dasharray="2 2"/><path d="M30.500 0v11" stroke="#17b32d" stroke-dasharray="2 1" stroke-width="1.300"/></svg>
<svg class="vfrag vf3" width="102" height="14" viewBox="0 0 102 14"><rect y="1" width="21" height="13" fill="#e8eef9"/><path d="M26 6.500h76M38 0v14M62 0v14M86 0v14" stroke="#d6d6d6" stroke-dasharray="2 2"/><path d="M22.500 0v14" stroke="#0a7d1a" stroke-dasharray="2 1" stroke-width="1.300"/></svg>

<!-- View menu -->
<div class="vm ma">
  <div class="vi"><div class="vii"><svg width="18" height="18"><use href="#i-cut"/></svg></div><div class="vit">Cu<u>t</u></div></div>
  <div class="vi"><div class="vii"><svg width="18" height="18"><use href="#i-copy"/></svg></div><div class="vit"><u>C</u>opy</div></div>
  <div class="vi"><div class="vii"><svg width="18" height="18"><use href="#i-paste"/></svg></div><div class="vit"><u>P</u>aste</div></div>
  <div class="vsep"></div>
  <div class="vi vsub vhi"><div class="vii"></div><div class="vit"><u>V</u>iew</div></div>
  <div class="vi vsub"><div class="vii"></div><div class="vit">F<u>o</u>rmat</div></div>
  <div class="vi vsub"><div class="vii"></div><div class="vit">Shap<u>e</u></div></div>
  <div class="vsep"></div>
  <div class="vi"><div class="vii"><svg width="18" height="18"><use href="#i-help"/></svg></div><div class="vit"><u>H</u>elp</div></div>
  <div class="vsep"></div>
  <div class="vi"><div class="vii"></div><div class="vit">P<u>r</u>operties</div></div>
</div>
<div class="vm mb">
  <div class="vi"><div class="vii"></div><div class="vit">Last <u>Z</u>oom</div></div>
  <div class="vi"><div class="vii"></div><div class="vit"><u>W</u>hole Page</div></div>
  <div class="vi"><div class="vii"></div><div class="vit"><u>4</u>00%</div></div>
  <div class="vi"><div class="vii"></div><div class="vit"><u>2</u>00%</div></div>
  <div class="vi"><div class="vii"><div class="vchk"><svg width="9" height="8" viewBox="0 0 9 8"><path d="M1 4l2.500 2.500L8 1.500" fill="none" stroke="#111" stroke-width="1.700"/></svg></div></div><div class="vit"><u>1</u>00%</div></div>
  <div class="vi"><div class="vii"></div><div class="vit"><u>5</u>0%</div></div>
  <div class="vsep"></div>
  <div class="vi"><div class="vii"><svg width="18" height="18"><use href="#i-cprop"/></svg></div><div class="vit">Cust<u>o</u>m Properties Window</div></div>
  <div class="vi"><div class="vii"><svg width="18" height="18"><use href="#i-size"/></svg></div><div class="vit"><u>S</u>ize &amp; Position Window</div></div>
  <div class="vsep"></div>
  <div class="vi"><div class="vii"><svg width="18" height="18"><use href="#i-layer"/></svg></div><div class="vit"><u>L</u>ayer Properties...</div></div>
</div>

<!-- Format menu -->
<div class="vm mc">
  <div class="vi"><div class="vii"><svg width="18" height="18"><use href="#i-cut"/></svg></div><div class="vit">Cu<u>t</u></div></div>
  <div class="vi"><div class="vii"><svg width="18" height="18"><use href="#i-copy"/></svg></div><div class="vit"><u>C</u>opy</div></div>
  <div class="vi"><div class="vii"><svg width="18" height="18"><use href="#i-paste"/></svg></div><div class="vit"><u>P</u>aste</div></div>
  <div class="vsep"></div>
  <div class="vi vsub"><div class="vii"></div><div class="vit"><u>V</u>iew</div></div>
  <div class="vi vsub vhi"><div class="vii"></div><div class="vit">F<u>o</u>rmat</div></div>
  <div class="vi vsub"><div class="vii"></div><div class="vit">Shap<u>e</u></div></div>
  <div class="vsep"></div>
  <div class="vi"><div class="vii"><svg width="18" height="18"><use href="#i-help"/></svg></div><div class="vit"><u>H</u>elp</div></div>
  <div class="vsep"></div>
  <div class="vi"><div class="vii"></div><div class="vit">P<u>r</u>operties</div></div>
</div>
<div class="vm md">
  <div class="vi"><div class="vii"><svg width="18" height="18"><use href="#i-txtA"/></svg></div><div class="vit"><u>T</u>ext...</div></div>
  <div class="vi"><div class="vii"><svg width="18" height="18"><use href="#i-line"/></svg></div><div class="vit"><u>L</u>ine...</div></div>
  <div class="vi"><div class="vii"><svg width="18" height="18"><use href="#i-bkt"/></svg></div><div class="vit"><u>F</u>ill...</div></div>
  <div class="vsep"></div>
  <div class="vi vdis"><div class="vii"><svg width="18" height="18"><use href="#i-pic"/></svg></div><div class="vit">Pict<u>u</u>re...</div></div>
  <div class="vi vdis"><div class="vii"></div><div class="vit">I<u>n</u>k...</div></div>
  <div class="vsep"></div>
  <div class="vi"><div class="vii"></div><div class="vit"><u>P</u>rotection...</div></div>
  <div class="vi"><div class="vii"></div><div class="vit"><u>B</u>ehavior...</div></div>
  <div class="vi"><div class="vii"></div><div class="vit">Sp<u>e</u>cial...</div></div>
  <div class="vsep"></div>
  <div class="vi"><div class="vii"></div><div class="vit"><u>S</u>tyle...</div></div>
  <div class="vsep"></div>
  <div class="vi"><div class="vii"></div><div class="vit">Laye<u>r</u>...</div></div>
</div>

<!-- Shape menu -->
<div class="vm me">
  <div class="vi"><div class="vii"><svg width="18" height="18"><use href="#i-cut"/></svg></div><div class="vit">Cu<u>t</u></div></div>
  <div class="vi"><div class="vii"><svg width="18" height="18"><use href="#i-copy"/></svg></div><div class="vit"><u>C</u>opy</div></div>
  <div class="vi"><div class="vii"><svg width="18" height="18"><use href="#i-paste"/></svg></div><div class="vit"><u>P</u>aste</div></div>
  <div class="vsep"></div>
  <div class="vi vsub"><div class="vii"></div><div class="vit"><u>V</u>iew</div></div>
  <div class="vi vsub"><div class="vii"></div><div class="vit">F<u>o</u>rmat</div></div>
  <div class="vi vsub vhi"><div class="vii"></div><div class="vit">Shap<u>e</u></div></div>
  <div class="vsep"></div>
  <div class="vi"><div class="vii"><svg width="18" height="18"><use href="#i-help"/></svg></div><div class="vit"><u>H</u>elp</div></div>
  <div class="vsep"></div>
  <div class="vi"><div class="vii"></div><div class="vit">P<u>r</u>operties</div></div>
</div>
<div class="vm mf">
  <div class="vi"><div class="vii"><svg width="18" height="18"><use href="#i-cprop"/></svg></div><div class="vit"><u>C</u>ustom Properties...</div></div>
  <div class="vsep"></div>
  <div class="vi"><div class="vii"><svg width="18" height="18"><use href="#i-grp"/></svg></div><div class="vit"><u>G</u>roup</div></div>
  <div class="vi vdis"><div class="vii"><svg width="18" height="18"><use href="#i-ugrp"/></svg></div><div class="vit"><u>U</u>ngroup</div></div>
  <div class="vsep"></div>
  <div class="vi"><div class="vii"><svg width="18" height="18"><use href="#i-front"/></svg></div><div class="vit">Bring to <u>F</u>ront</div></div>
  <div class="vi"><div class="vii"><svg width="18" height="18"><use href="#i-back"/></svg></div><div class="vit">Send to <u>B</u>ack</div></div>
  <div class="vsep"></div>
  <div class="vi"><div class="vii"><svg width="18" height="18"><use href="#i-rl"/></svg></div><div class="vit">Rotate <u>L</u>eft</div></div>
  <div class="vi"><div class="vii"><svg width="18" height="18"><use href="#i-rr"/></svg></div><div class="vit">Rotate <u>R</u>ight</div></div>
  <div class="vi"><div class="vii"><svg width="18" height="18"><use href="#i-fv"/></svg></div><div class="vit">Flip <u>V</u>ertical</div></div>
  <div class="vi"><div class="vii"><svg width="18" height="18"><use href="#i-fh"/></svg></div><div class="vit">Flip <u>H</u>orizontal</div></div>
  <div class="vi"><div class="vii"><svg width="18" height="18"><use href="#i-rt"/></svg></div><div class="vit">Rotate <u>T</u>ext</div></div>
  <div class="vi"><div class="vii"></div><div class="vit">Find S<u>i</u>milar Shapes</div></div>
</div>

<svg class="vcur vc1" width="14" height="22"><use href="#i-cur"/></svg>
<svg class="vcur vc2" width="14" height="22"><use href="#i-cur"/></svg>
<svg class="vcur vc3" width="14" height="22"><use href="#i-cur"/></svg>

<script src="https://cdn.jsdelivr.net/npm/bootstrap@5.3.0/dist/js/bootstrap.bundle.min.js"></script>
</body>
</html>
